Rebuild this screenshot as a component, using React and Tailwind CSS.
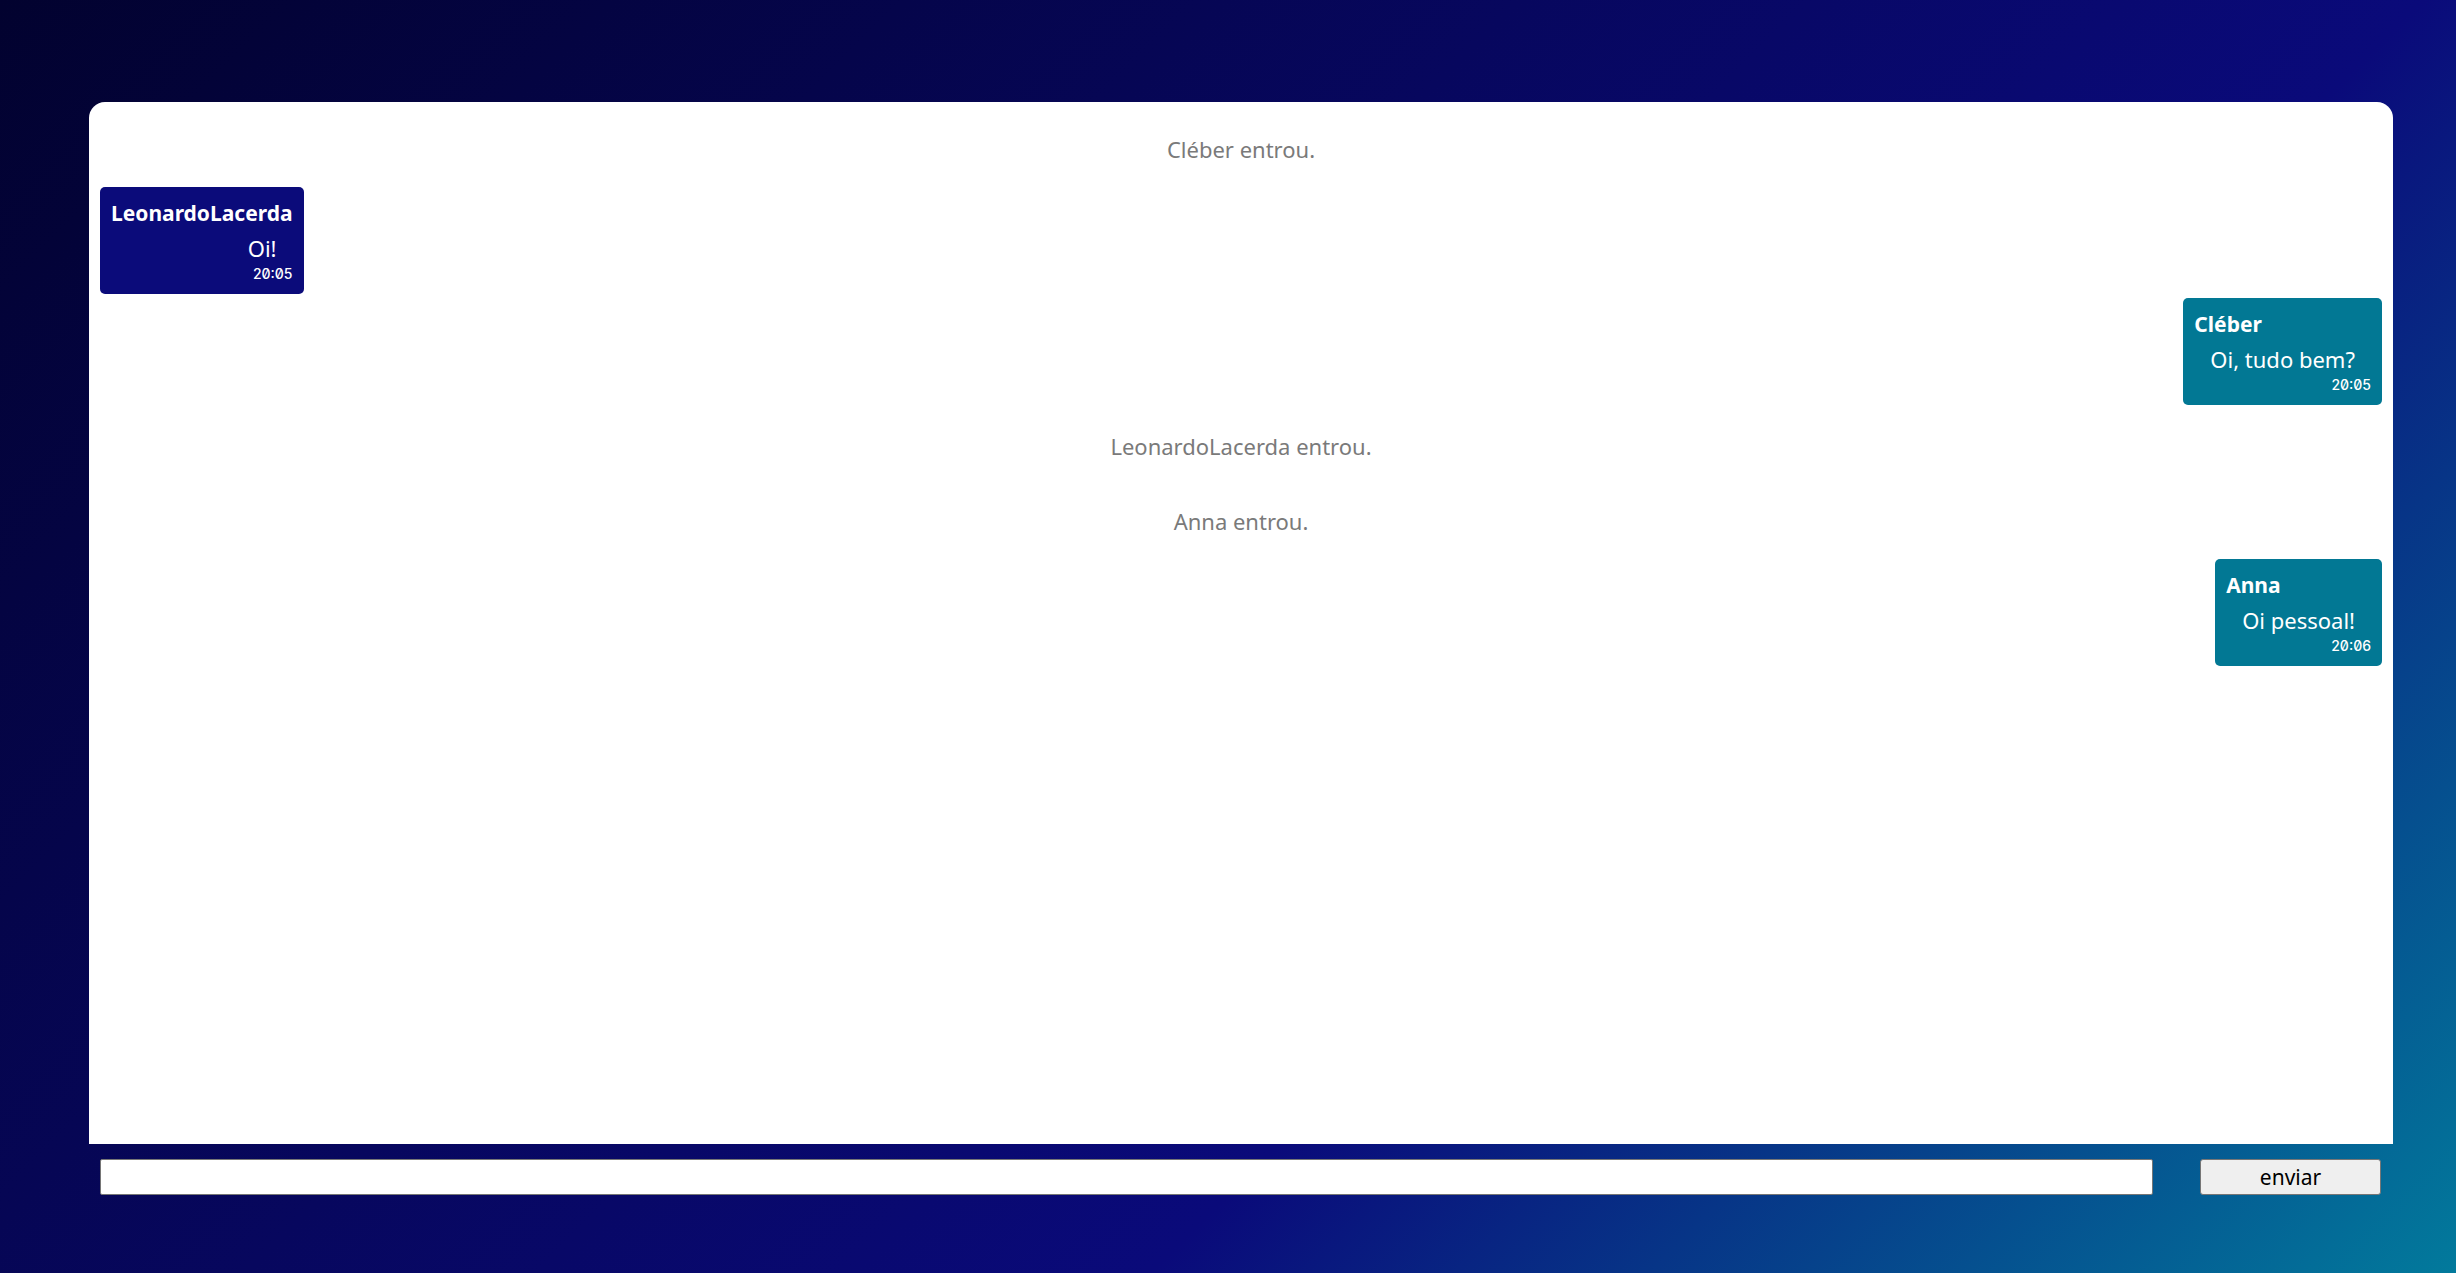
import React from "react";

const messages = [
  { type: "system", text: "Cléber entrou." },
  { type: "msg", side: "left", user: "LeonardoLacerda", text: "Oi!", time: "20:05" },
  { type: "msg", side: "right", user: "Cléber", text: "Oi, tudo bem?", time: "20:05" },
  { type: "system", text: "LeonardoLacerda entrou." },
  { type: "system", text: "Anna entrou." },
  { type: "msg", side: "right", user: "Anna", text: "Oi pessoal!", time: "20:06" },
];

function SystemMessage({ text }) {
  return (
    <p className="text-center text-[22px] leading-[25px] text-[#7a7a7a] pt-[25px] pb-[21px]">
      {text}
    </p>
  );
}

function Bubble({ msg }) {
  const mine = msg.side === "right";
  return (
    <div
      className={`flex flex-col rounded-[5px] px-[11px] pt-[12px] pb-[12px] text-white ${
        mine ? "self-end bg-[#027894]" : "self-start bg-[#0b0b7a]"
      }`}
    >
      <span className="text-[21px] leading-[28px] font-bold">{msg.user}</span>
      <span className="mt-[6px] px-[16px] text-right text-[22px] leading-[31px]">{msg.text}</span>
      <span className="mt-[2px] text-right font-['Inter',sans-serif] text-[14px] leading-[16px] font-medium [font-feature-settings:'zero']">
        {msg.time}
      </span>
    </div>
  );
}

export default function App() {
  return (
    <div className="min-h-screen w-full bg-[linear-gradient(135deg,#02022f_0%,#0a0a7a_65%,#027a9c_100%)] pt-[102px] pl-[89px] font-['Noto_Sans',sans-serif]">
      <div className="w-[2304px]">
        {/* Chat area */}
        <div className="h-[1042px] bg-white rounded-t-2xl pt-[10px] px-[11px] flex flex-col gap-[4px]">
          {messages.map((m, i) =>
            m.type === "system" ? (
              <SystemMessage key={i} text={m.text} />
            ) : (
              <Bubble key={i} msg={m} />
            )
          )}
        </div>

        {/* Footer */}
        <div className="flex items-center px-[11px] pt-[15px]">
          <input
            type="text"
            className="w-[2053px] h-[36px] bg-white border border-[#767676] rounded-[2px] outline-none"
          />
          <button className="ml-[47px] w-[181px] h-[36px] bg-[#efefef] border border-[#767676] rounded-[3px] text-[21px] leading-none text-black">
            enviar
          </button>
        </div>
      </div>
    </div>
  );
}
